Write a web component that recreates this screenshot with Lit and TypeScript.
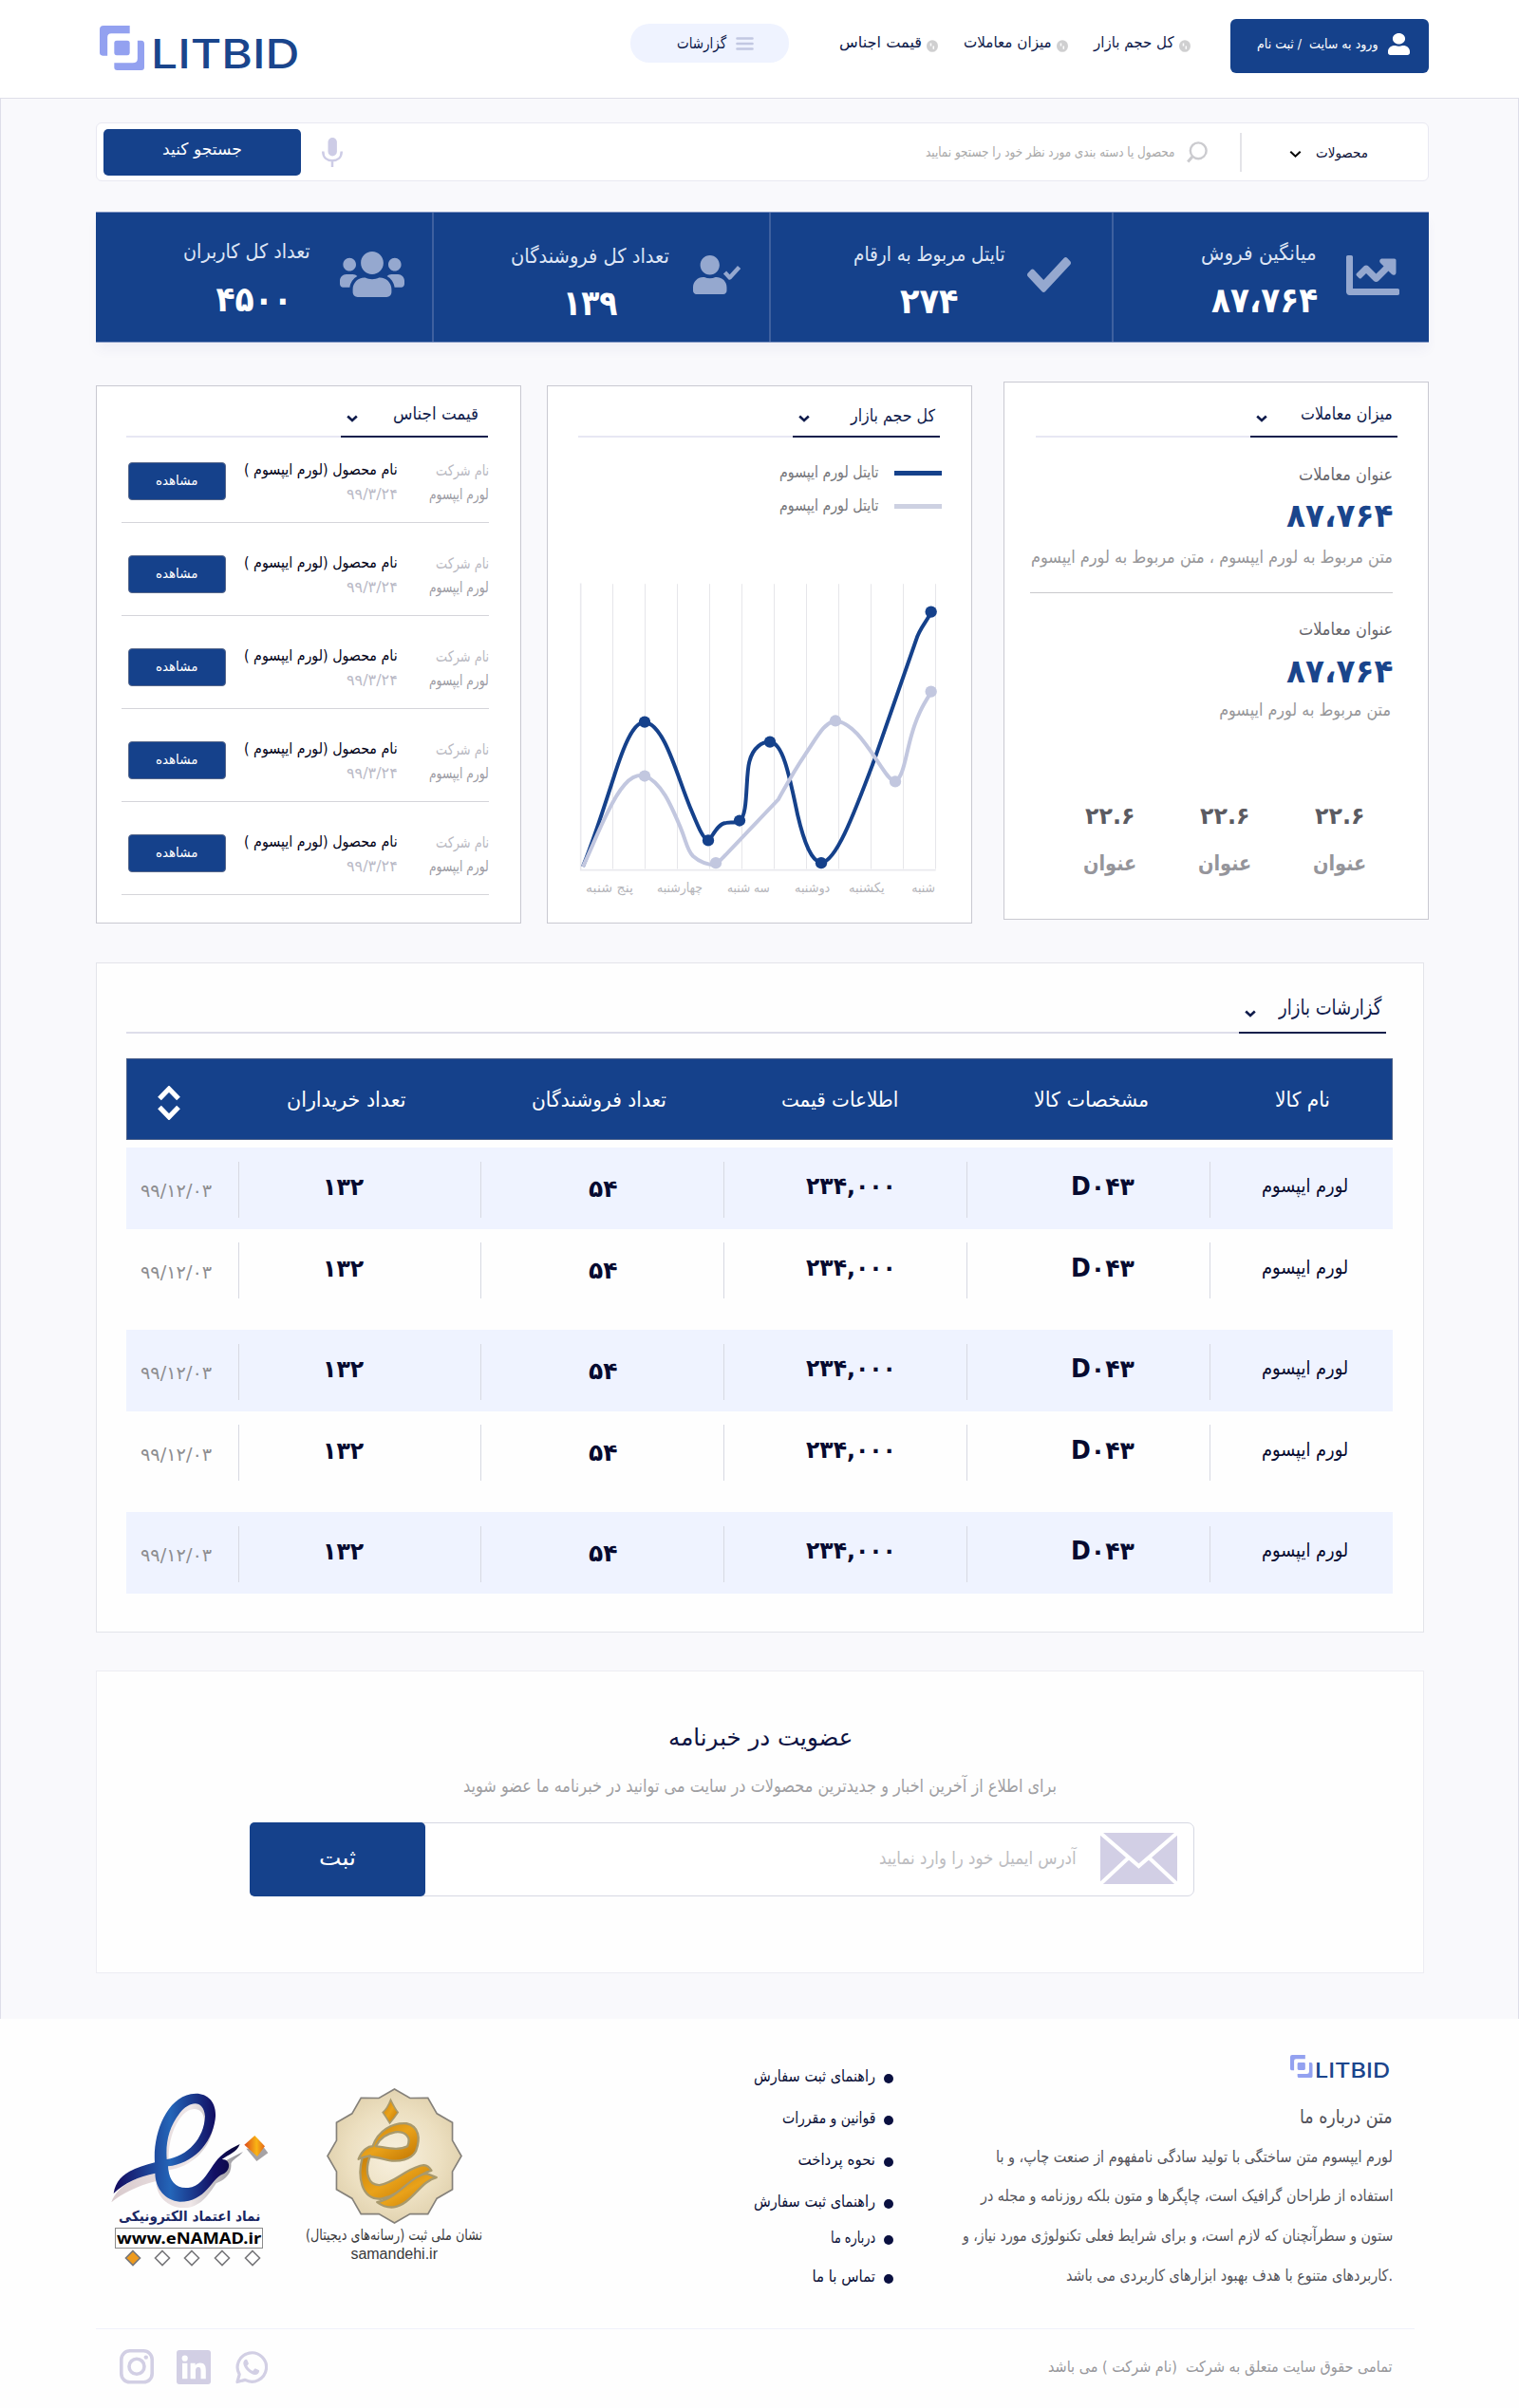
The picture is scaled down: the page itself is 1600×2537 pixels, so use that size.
import { LitElement, html, svg, css } from "lit";
import { customElement, property, state } from "lit/decorators.js";
import { styleMap } from "lit/directives/style-map.js";

/** One line of text condensed or widened to fill a slot of a given width. */
@customElement("fit-text")
class FitText extends LitElement {
  @property({ type: Number }) w = 100;
  @property({ type: Number }) tall = 1.12;
  @state() ratio = 1;
  static styles = css`
    :host { display: block; flex: none; line-height: 1; height: 1em; }
    .slot { height: 1em; direction: rtl; }
    .line { display: inline-block; white-space: pre; transform-origin: 100% 84.6%; line-height: 1; vertical-align: top; }
  `;
  firstUpdated() {
    const line = this.renderRoot.querySelector(".line") as HTMLElement;
    const natural = line.offsetWidth;
    if (natural > 0) this.ratio = this.w / natural;
  }
  render() {
    return html`<div class="slot" style=${styleMap({ width: this.w + "px" })}><span class="line" style=${styleMap({ transform: `scale(${this.ratio}, ${this.tall})` })}><slot></slot></span></div>`;
  }
}

const brand = (w: number, h: number) => html`<svg width=${w} height=${h} viewBox="0 0 46 46" preserveAspectRatio="none" fill="#93a1f0">
  <path d="M4 0H31V8H12Q8 8 8 12V31H3Q0 31 0 28V4Q0 0 4 0Z"/>
  <rect x="15" y="15.5" width="16" height="15" rx="2.5"/>
  <path d="M39 15.5H43Q46 15.5 46 19V43Q46 46 43 46H18Q15 46 15 43V38.5H34Q39 38.5 39 34Z"/></svg>`;

const chevron = (w = 12, h = 8, sw = 2.6) => html`<svg class="chev" width=${w} height=${h} viewBox="0 0 12 8" fill="none" stroke="currentColor" stroke-width=${sw}><path d="M1.2 1.5L6 6L10.8 1.5"/></svg>`;

const userPath = "M224 256c70.7 0 128-57.3 128-128S294.7 0 224 0 96 57.3 96 128s57.3 128 128 128zm89.6 32h-16.7c-22.2 10.2-46.9 16-72.9 16s-50.6-5.8-72.9-16h-16.7C60.2 288 0 348.2 0 422.4V464c0 26.5 21.5 48 48 48h352c26.5 0 48-21.5 48-48v-41.6c0-74.2-60.2-134.4-134.4-134.4z";

const icons = {
  chart: html`<svg width="56" height="42" viewBox="0 64 512 384" preserveAspectRatio="none" fill="#95a8cf"><path d="M496 384H64V80c0-8.84-7.16-16-16-16H16C7.16 64 0 71.16 0 80v336c0 17.67 14.33 32 32 32h464c8.84 0 16-7.16 16-16v-32c0-8.84-7.16-16-16-16zM464 96H345.94c-21.38 0-32.09 25.85-16.97 40.97l32.4 32.4L288 242.75l-73.37-73.37c-12.5-12.5-32.76-12.5-45.25 0l-68.69 68.69c-6.25 6.25-6.25 16.38 0 22.63l22.62 22.62c6.25 6.25 16.38 6.25 22.63 0L192 237.25l73.37 73.37c12.5 12.5 32.76 12.5 45.25 0l96-96 32.4 32.4c15.12 15.12 40.97 4.41 40.97-16.97V112c.01-8.84-7.15-16-15.99-16z"/></svg>`,
  check: html`<svg width="46" height="37" viewBox="0 65 512 382" preserveAspectRatio="none" fill="#95a8cf"><path d="M173.898 439.404l-166.4-166.4c-9.997-9.997-9.997-26.206 0-36.204l36.203-36.204c9.997-9.998 26.207-9.998 36.204 0L192 312.69 432.095 72.596c9.997-9.997 26.207-9.997 36.204 0l36.203 36.204c9.997 9.997 9.997 26.206 0 36.204l-294.4 294.401c-9.998 9.997-26.207 9.997-36.204-.001z"/></svg>`,
  seller: html`<svg width="51" height="41" viewBox="0 0 51 41" fill="#95a8cf"><path transform="scale(.0792 .0801)" d=${userPath}/><path d="M33.5 18L38.6 23.5L48.6 12.5" fill="none" stroke="#95a8cf" stroke-width="4.4" stroke-linejoin="round"/></svg>`,
  users: html`<svg width="68" height="48" viewBox="0 32 640 448" preserveAspectRatio="none" fill="#95a8cf"><path d="M96 224c35.3 0 64-28.7 64-64s-28.7-64-64-64-64 28.7-64 64 28.7 64 64 64zm448 0c35.3 0 64-28.7 64-64s-28.7-64-64-64-64 28.7-64 64 28.7 64 64 64zm32 32h-64c-17.6 0-33.5 7.1-45.1 18.6 40.3 22.1 68.9 62 75.1 109.4h66c17.7 0 32-14.3 32-32v-32c0-35.3-28.7-64-64-64zm-256 0c61.9 0 112-50.1 112-112S381.9 32 320 32 208 82.1 208 144s50.1 112 112 112zm76.8 32h-8.3c-20.8 10-43.9 16-68.5 16s-47.6-6-68.5-16h-8.3C179.6 288 128 339.6 128 403.2V432c0 26.5 21.5 48 48 48h288c26.5 0 48-21.5 48-48v-28.8c0-63.6-51.6-115.2-115.2-115.2zm-223.7-13.4C161.5 263.1 145.6 256 128 256H64c-35.3 0-64 28.7-64 64v32c0 17.7 14.3 32 32 32h65.9c6.3-47.4 34.9-87.3 75.2-109.4z"/></svg>`,
};

const nav = [
  { t: "کل حجم بازار", w: 85 },
  { t: "میزان معاملات", w: 93 },
  { t: "قیمت اجناس", w: 87 },
];

const stats = [
  { cls: "sales", icon: icons.chart, t: "میانگین فروش", tw: 122, n: "۸۷،۷۶۴", nw: 112 },
  { cls: "figures", icon: icons.check, t: "تایتل مربوط به ارقام", tw: 160, n: "۲۷۴", nw: 61 },
  { cls: "sellers", icon: icons.seller, t: "تعداد کل فروشندگان", tw: 167, n: "۱۳۹", nw: 57 },
  { cls: "members", icon: icons.users, t: "تعداد کل کاربران", tw: 134, n: "۴۵۰۰", nw: 81 },
];

const days = [
  { t: "شنبه", w: 25, g: 0 },
  { t: "یکشنبه", w: 38, g: 28 },
  { t: "دوشنبه", w: 37, g: 20 },
  { t: "سه شنبه", w: 45, g: 26 },
  { t: "چهارشنبه", w: 48, g: 26 },
  { t: "پنج شنبه", w: 50, g: 25 },
];

const darkDots = [[357, 964], [558, 1280], [657, 1227], [753, 1017], [915, 1340], [1262, 670]];
const lightDots = [[357, 1108], [582, 1340], [960, 961], [1149, 1123], [1262, 883]];

const links = [
  { t: "راهنمای ثبت سفارش", w: 128 },
  { t: "قوانین و مقررات", w: 98 },
  { t: "نحوه پرداخت", w: 82 },
  { t: "راهنمای ثبت سفارش", w: 128 },
  { t: "درباره ما", w: 47 },
  { t: "تماس با ما", w: 67 },
];

const about = [
  { t: "لورم ایپسوم متن ساختگی با تولید سادگی نامفهوم از صنعت چاپ، و با", w: 418 },
  { t: "استفاده از طراحان گرافیک است، چاپگرها و متون بلکه روزنامه و مجله در", w: 434 },
  { t: "ستون و سطرآنچنان که لازم است، و برای شرایط فعلی تکنولوژی مورد نیاز، و", w: 453 },
  { t: ".کاربردهای متنوع با هدف بهبود ابزارهای کاربردی می باشد", w: 344 },
];

const star = Array.from({ length: 24 }, (_, i) => {
  const r = i % 2 ? 190 : 212;
  const a = (i * Math.PI) / 12;
  return `${(1007 + r * Math.sin(a)).toFixed(1)},${(456 - r * Math.cos(a)).toFixed(1)}`;
}).join(" ");

@customElement("app-root")
class AppRoot extends LitElement {
  static styles = css`
    :host { display: block; width: 1600px; background: #fefefe; font-family: "DejaVu Sans", "Noto Sans", sans-serif; direction: rtl; color: #0b1038; }
    * { box-sizing: border-box; }
    svg { display: block; flex: none; }

    .header { display: flex; align-items: flex-start; height: 104px; padding: 0 95px 0 105px; background: #fff; border-bottom: 1px solid #dedee9; }
    .login { display: flex; width: 209px; height: 57px; margin-top: 20px; padding: 15px 20px 0 0; background: #15418b; color: #fff; border-radius: 6px; font-size: 12.5px; }
    .login fit-text { margin: 6px 11px 0 0; }
    .nav { display: flex; gap: 27px; margin: 38px 42px 0 0; color: #101c4c; font-size: 14.5px; }
    .nav-item { display: flex; gap: 5px; }
    .dot { width: 12px; height: 13px; margin-top: 4px; }
    .reports { display: flex; width: 167px; height: 41px; margin: 25px 53px 0 0; padding: 14px 37px 0 0; background: #eff3ff; border-radius: 20px; font-size: 14.5px; color: #101c4c; }
    .reports fit-text { margin: 0 10px 0 0; }
    .logo { display: flex; direction: ltr; margin: 27px auto 0 0; color: #1a458c; font-family: "Inter", "Roboto", sans-serif; font-weight: 500; }
    .logo.big { font-size: 42.5px; gap: 7px; }
    .logo.big fit-text { margin-top: 9px; }
    .logo.small { font-size: 22px; gap: 3px; margin: 38px 0 0 0; width: 108px; }
    .logo.small fit-text { margin-top: 4.5px; }

    .main { height: 2023px; padding: 25px 94px 0 100px; background: #f9f9fc; border: solid #dedee9; border-width: 0 1px; }
    .search { display: flex; height: 62px; padding-right: 63px; background: #fff; border: 1px solid #e9e9f2; border-radius: 6px; }
    .search .kind { margin-top: 25px; font-size: 13px; }
    .search .chev { margin: 28px 15px 0 0; color: #000; }
    .divider { width: 2px; height: 41px; margin: 10px 50px 0 0; background: #e4e4e8; }
    .search .lens { margin: 19px 34px 0 0; }
    .search .hint { margin: 25px 13px 0 0; color: #a9a9a9; font-size: 12.5px; }
    .search .mic { margin: 15px auto 0 22px; }
    .go { display: flex; justify-content: center; width: 208px; height: 49px; margin: 6px 0 0 7px; padding-top: 15px; background: #15418b; border-radius: 5px; color: #fff; font-size: 15.5px; }

    .stats { display: grid; grid-template-columns: 334px 361px 355px 354px; height: 138px; margin-top: 32px; background: #15418b; border: solid #8498c5; border-width: 1px 0; box-shadow: 0 9px 12px -2px rgba(70, 70, 160, .06); color: #fff; }
    .stat { display: flex; border-left: 2px solid #3e609f; }
    .stat:last-child { border-left: 0; }
    .stat-text { display: flex; flex-direction: column; align-items: center; color: #dde5f5; font-size: 19px; }
    .stat-text .num { color: #fff; font-size: 33px; font-weight: bold; }
    .sales svg { margin: 45px 31px 0 0; }
    .sales .stat-text { margin: 34px 30px 0 0; } .sales .num { margin: 24px 0 0 12px; }
    .figures svg { margin: 47px 43px 0 0; }
    .figures .stat-text { margin: 35px 23px 0 0; } .figures .num { margin: 24px 0 0 0; }
    .sellers svg { margin: 45px 29px 0 0; }
    .sellers .stat-text { margin: 37px 25px 0 0; } .sellers .num { margin: 24px 0 0 0; }
    .members svg { margin: 41px 29px 0 0; }
    .members .stat-text { margin: 32px 31px 0 0; } .members .num { margin: 25px 0 0 15px; }

    .cards { display: grid; grid-template-columns: 448px 448px 448px; column-gap: 30px; height: 570px; margin-top: 41px; align-items: start; }
    .cards > :nth-child(2) { margin-right: 3px; margin-left: -3px; }
    .card { width: 448px; height: 567px; background: #fff; border: 1px solid #c9c9d1; }
    .low { margin-top: 4px; }
    .tabline { display: flex; height: 54px; width: 381px; margin-right: 33px; border-bottom: 2px solid #e7e7f3; }
    .tab { display: flex; justify-content: space-between; width: 155px; margin-bottom: -2px; padding: 0 5px 0 6px; border-bottom: 2px solid #12204c; font-size: 16px; color: #101c4c; }
    .trades .tabline { height: 58px; margin-right: 32px; }
    .trades .tab fit-text { margin-top: 26px; } .trades .chev { margin-top: 34px; }
    .volume .tab fit-text { margin-top: 24px; } .volume .chev { margin-top: 30px; }
    .prices .tab { padding-right: 10px; } .prices .tab fit-text { margin-top: 22px; } .prices .tabline { margin-right: 34px; } .prices .chev { margin-top: 30px; }

    .trade { width: 382px; margin-right: 37px; }
    .trade .name { margin-top: 31px; font-size: 16px; color: #66666c; }
    .trade .sum { margin-top: 20px; font-size: 31px; font-weight: bold; color: #1a458c; }
    .trade .note { margin-top: 20px; font-size: 16px; color: #97979a; }
    .trade.first { height: 163.5px; padding-top: .5px; border-bottom: 1px solid #c9c9cc; }
    .trade.second { height: 194px; padding-top: 0; }
    .trade.second .sum { margin-top: 21px; }
    .trade.second .note { margin: 17px 2px 0 0; }
    .trios { display: flex; gap: 66px; margin-right: 65px; }
    .trio { width: 55px; display: flex; flex-direction: column; align-items: center; gap: 28px; font-weight: bold; font-size: 22px; color: #5b5b62; }
    .trio .cap { font-size: 20px; color: #95959b; }

    .legend { display: flex; align-items: center; height: 35px; margin-right: 31px; gap: 17px; font-size: 15px; color: #77777b; }
    .legend.first { margin-top: 20px; }
    .swatch { width: 50px; height: 5px; background: #15418b; }
    .swatch.pale { background: #cdd1e2; }
    .plot { margin: 62px 34px 0 0; }
    .days { display: flex; margin: 11px 38px 0 0; font-size: 12.5px; color: #b5b5ba; }

    .item { display: flex; width: 387px; height: 98px; margin-right: 33px; border-bottom: 1px solid #d5d5da; font-size: 14.5px; }
    .item.first { height: 90px; } 
    .item .col { display: flex; flex-direction: column; gap: 11px; }
    .item .org { width: 96px; padding-top: 36px; color: #b9b9c2; font-size: 14px; }
    .item .org .strong { color: #9c9ca4; }
    .item .prod { width: 162px; padding-top: 35px; color: #000016; }
    .item .prod .date { color: #b9b9c6; }
    .item.first .org { padding-top: 28px; } .item.first .prod { padding-top: 27px; }
    .view { display: flex; justify-content: center; width: 103px; height: 40px; margin: 34px 19px 0 0; padding-top: 13px; background: #15418b; border: 1px solid #56678b; border-radius: 4px; color: #fff; font-size: 12.5px; }
    .item.first .view { margin-top: 26px; }

    .market { width: 1399px; height: 706px; margin-top: 42px; margin-right: 5px; padding: 0 32px; background: #fefefe; border: 1px solid #e3e4ea; }
    .market .tabline { width: 1327px; height: 74px; margin-right: 7px; border-bottom: 2px solid #dedeea; }
    .market .tab { font-size: 20px; padding-left: 6px; } .market .tab fit-text { margin-top: 37px; } .market .chev { margin-top: 49px; }
    .thead, .row { display: grid; grid-template-columns: 193px 256px 256px 256px 255px 117px; width: 1334px; }
    .thead { height: 86px; margin: 26px 0 8px; background: #15418b; border: 1px solid #4c618a; color: #fff; font-size: 19.5px; padding-top: 34px; }
    .row { height: 86px; color: #060a30; }
    .row:nth-child(odd) { background: #eff3ff; }
    .row:nth-child(even) { margin-bottom: 20px; }
    .cell { height: 59px; margin-top: 15px; border-left: 1px solid #d7d9e2; display: flex; font-size: 22.5px; font-weight: bold; }
    .row:nth-child(even) .cell { margin-top: 14px; }
    .row:nth-child(even) fit-text { margin-top: 1px; }
    .cell:last-child { border-left: 0; }
    .c1 { font-size: 18px; font-weight: normal; padding: 17px 47px 0 0; }
    .c2 { padding: 16px 79px 0 0; }
    .c3 { padding: 15px 74px 0 0; }
    .c4 { padding: 18px 112px 0 0; }
    .c5 { padding: 16px 123px 0 0; }
    .c6 { font-size: 17px; font-weight: normal; color: #8d8d90; padding: 23px 28px 0 0; }
    .h1 { margin-right: 65px; } .h2 { margin-right: 63px; } .h3 { margin-right: 71px; } .h4 { margin-right: 59px; } .h5 { margin-right: 78px; }
    .sort { margin: -6px 60px 0 0; }

    .news { display: flex; flex-direction: column; align-items: center; width: 1399px; height: 319px; margin-top: 40px; margin-right: 5px; padding-top: 60px; background: #fefefe; border: 1px solid #ededf3; color: #0d1242; font-size: 22px; }
    .news .sub { margin-top: 31px; font-size: 17px; color: #a0a0a3; }
    .mail { display: flex; width: 995px; height: 78px; margin: 29px 241px 0 0; align-self: flex-start; border: 1px solid #d6d8e3; border-radius: 7px; padding-right: 17px; background: #fff; }
    .mail svg { margin-top: 10px; }
    .mail .hint { margin: 29px 25px 0 0; font-size: 17px; color: #bdbdc1; }
    .send { display: flex; justify-content: center; width: 185px; height: 78px; margin: -1px auto 0 -1px; padding-top: 28px; border-radius: 5px; background: #15418b; color: #fff; font-size: 21px; }

    .footer { height: 410px; background: #fefefe; }
    .top { display: flex; height: 327px; width: 1389px; margin-right: 110px; padding-right: 23px; border-bottom: 1px solid #f0f1fa; }
    .about { width: 453px; display: flex; flex-direction: column; font-size: 15px; color: #55555c; }
    .about .title { margin: 30px 0 0; font-size: 18px; color: #505058; }
    .about .para { display: flex; flex-direction: column; gap: 26.8px; margin-top: 26px; }
    .links { width: 150px; margin: 54px 73px 0 0; font-size: 15px; color: #0b1038; }
    .link { display: flex; gap: 9px; height: 44px; }
    .link:nth-child(4) { height: 38px; } .link:nth-child(5) { height: 41px; }
    .bullet { width: 10px; height: 10px; border-radius: 50%; background: #0a1040; margin-top: 4px; }
    .samandehi { display: flex; flex-direction: column; align-items: center; width: 186px; margin: 73px 283px 0 0; color: #39393b; font-size: 14px; }
    .samandehi .ltr { margin-top: 5px; font-family: "Liberation Sans", sans-serif; font-size: 16px; }
    .samandehi .fa { margin-top: 5px; }
    .enamad { display: flex; flex-direction: column; width: 170px; margin: 76px 33px 0 0; color: #1b2764; font-weight: bold; font-size: 15px; }
    .enamad > svg:first-child { margin-right: 4px; }
    .enamad .fa { margin: 2px 15px 0 0; }
    .site { width: 156px; height: 22px; margin: 4px 12px 0 0; padding: 2px 1px; border: 1px solid #8b8b8b; color: #000; font-family: "Noto Sans", "Open Sans", sans-serif; font-size: 16px; }
    .rates { margin: 1px 12px 0 0; }
    .bottom { display: flex; padding: 34px 133px 0 126px; color: #97979b; font-size: 14.5px; }
    .bottom fit-text { margin-top: -1px; }
    .social { display: flex; align-items: flex-start; direction: ltr; gap: 24px; margin: -13px auto 0 0; }
  `;

  tabHead(t: string, w: number) {
    return html`<div class="tabline"><div class="tab"><fit-text w=${w}>${t}</fit-text>${chevron()}</div></div>`;
  }

  header() {
    return html`<header class="header">
      <div class="login"><svg width="23" height="23" viewBox="0 0 448 512" preserveAspectRatio="none" fill="#fff"><path d=${userPath}/></svg><fit-text w="128">ورود به سایت  / ثبت نام</fit-text></div>
      <nav class="nav">${nav.map((n) => html`<div class="nav-item"><svg class="dot" viewBox="0 0 12 13"><ellipse cx="6" cy="6.5" rx="6" ry="6.3" fill="#cfcfd0"/><path d="M4.5 3.4V6.4M7.3 6.6V9.8" stroke="#fff" stroke-width="1.5"/></svg><fit-text w=${n.w}>${n.t}</fit-text></div>`)}</nav>
      <div class="reports"><svg width="19" height="14" viewBox="0 0 19 14" stroke="#c2c8e2" stroke-width="2.6" stroke-linecap="round"><path d="M1.5 1.5H17.5M1.5 7H17.5M1.5 12.5H17.5"/></svg><fit-text w="52">گزارشات</fit-text></div>
      <div class="logo big">${brand(47, 47)}<fit-text w="157" tall="1">LITBID</fit-text></div>
    </header>`;
  }

  search() {
    return html`<div class="search">
      <fit-text class="kind" w="55">محصولات</fit-text>${chevron(13, 9, 1.9)}
      <div class="divider"></div>
      <svg class="lens" width="22" height="23" viewBox="0 0 22 23" fill="none" stroke="#cbcbcf" stroke-width="2.4"><circle cx="12.2" cy="9.8" r="8.4"/><path d="M6 16L1.2 21.6" stroke-width="3"/></svg>
      <fit-text class="hint" w="262">محصول یا دسته بندی مورد نظر خود را جستجو نمایید</fit-text>
      <svg class="mic" width="22" height="31" viewBox="0 0 22 31" fill="none" stroke="#cdcce6" stroke-width="2.5"><rect x="6.5" y="0" width="9.4" height="19.5" rx="4.7" fill="#cdcce6" stroke="none"/><path d="M1.3 14.5V15C1.3 21 5.5 24.3 11 24.3S20.7 21 20.7 15V14.5M11 24V31"/></svg>
      <div class="go"><fit-text w="84">جستجو کنید</fit-text></div>
    </div>`;
  }

  trades() {
    return html`<section class="card trades">${this.tabHead("میزان معاملات", 97)}
      <div class="trade first"><fit-text class="name" w="99">عنوان معاملات</fit-text><fit-text class="sum" w="112">۸۷،۷۶۴</fit-text><fit-text class="note" w="381">متن مربوط به لورم ایپسوم ، متن مربوط به لورم ایپسوم</fit-text></div>
      <div class="trade second"><fit-text class="name" w="99">عنوان معاملات</fit-text><fit-text class="sum" w="112">۸۷،۷۶۴</fit-text><fit-text class="note" w="181">متن مربوط به لورم ایپسوم</fit-text></div>
      <div class="trios">${[0, 1, 2].map(() => html`<div class="trio"><fit-text w="53">۲۲.۶</fit-text><fit-text class="cap" w="56">عنوان</fit-text></div>`)}</div>
    </section>`;
  }

  volume() {
    const dot = (c: string) => (p: number[]) => svg`<ellipse cx=${p[0]} cy=${p[1]} rx="18.5" ry="15.5" fill=${c} />`;
    return html`<section class="card low volume">${this.tabHead("کل حجم بازار", 89)}
      <div class="legend first"><span class="swatch"></span><fit-text w="104">تایتل لورم ایپسوم</fit-text></div>
      <div class="legend"><span class="swatch pale"></span><fit-text w="104">تایتل لورم ایپسوم</fit-text></div>
      <svg class="plot" width="380" height="306" viewBox="147 590 1140 775" preserveAspectRatio="none" fill="none">
        <path d="M155 594V1359H1277" stroke="#e9e9ee" stroke-width="5"/>
        ${Array.from({ length: 11 }, (_, i) => svg`<path d=${`M${256.5 + i * 102} 596V1356`} stroke="#e6e6ea" stroke-width="3"/>`)}
        <path vector-effect="non-scaling-stroke" stroke="#15418b" stroke-width="4" d="M162 1350C200 1270 235 1175 260 1110C290 1030 320 965 357 964C420 970 460 1110 500 1190C525 1240 540 1275 558 1280C570 1275 585 1235 615 1233C630 1231 645 1235 657 1227C685 1215 675 1110 688 1070C700 1030 730 1017 753 1017C795 1020 815 1110 840 1210C862 1290 885 1335 915 1340C960 1335 1010 1230 1085 1060L1215 745C1225 715 1245 700 1262 672"/>
        ${darkDots.map(dot("#15418b"))}
        <path vector-effect="non-scaling-stroke" stroke="#c2c7df" stroke-width="4" d="M162 1350C190 1300 210 1255 240 1205C275 1145 310 1100 357 1107C410 1125 440 1185 470 1245C490 1285 490 1305 510 1322C530 1337 560 1345 582 1346L780 1170C800 1140 825 1100 865 1050C905 1000 925 965 960 961C1010 965 1050 1015 1090 1065C1115 1095 1130 1120 1149 1123C1175 1110 1180 1060 1200 1000C1220 940 1240 915 1262 885"/>
        ${lightDots.map(dot("#c2c7df"))}
      </svg>
      <div class="days">${days.map((d) => html`<fit-text w=${d.w} style=${styleMap({ marginRight: d.g + "px" })}>${d.t}</fit-text>`)}</div>
    </section>`;
  }

  prices() {
    return html`<section class="card low prices">${this.tabHead("قیمت اجناس", 90)}
      ${[0, 1, 2, 3, 4].map((i) => html`<div class="item ${i === 0 ? "first" : ""}">
        <div class="col org"><fit-text w="56">نام شرکت</fit-text><fit-text class="strong" w="63">لورم ایپسوم</fit-text></div>
        <div class="col prod"><fit-text w="162">نام محصول (لورم ایپسوم )</fit-text><fit-text class="date" w="54">۹۹/۳/۲۴</fit-text></div>
        <div class="view"><fit-text w="44">مشاهده</fit-text></div>
      </div>`)}
    </section>`;
  }

  market() {
    return html`<section class="market">${this.tabHead("گزارشات بازار", 108)}
      <div class="thead">
        <fit-text class="h1" w="58">نام کالا</fit-text><fit-text class="h2" w="121">مشخصات کالا</fit-text><fit-text class="h3" w="123">اطلاعات قیمت</fit-text><fit-text class="h4" w="142">تعداد فروشندگان</fit-text><fit-text class="h5" w="125">تعداد خریداران</fit-text>
        <svg class="sort" width="24" height="36" viewBox="0 0 24 36" fill="none" stroke="#fff" stroke-width="5.2"><path d="M2 13.5L12 3.2L22 13.5M2 22.5L12 32.8L22 22.5"/></svg>
      </div>
      <div class="rows">${[0, 1, 2, 3, 4].map(() => html`<div class="row">
        <div class="cell c1"><fit-text w="91">لورم ایپسوم</fit-text></div>
        <div class="cell c2"><fit-text w="67" tall="1.15">D۰۴۳</fit-text></div>
        <div class="cell c3"><fit-text w="95">۲۳۴,۰۰۰</fit-text></div>
        <div class="cell c4"><fit-text w="30">۵۴</fit-text></div>
        <div class="cell c5"><fit-text w="43">۱۳۲</fit-text></div>
        <div class="cell c6"><fit-text w="75">۹۹/۱۲/۰۳</fit-text></div>
      </div>`)}</div>
    </section>`;
  }

  newsletter() {
    return html`<section class="news">
      <fit-text w="195">عضویت در خبرنامه</fit-text>
      <fit-text class="sub" w="625">برای اطلاع از آخرین اخبار و جدیدترین محصولات در سایت می توانید در خبرنامه ما عضو شوید</fit-text>
      <div class="mail">
        <svg width="81" height="54" viewBox="0 0 81 54"><rect width="81" height="54" fill="#d2cfe5"/><path d="M0 0L40.5 35L81 0M0 54L30 26M81 54L51 26" fill="none" stroke="#fff" stroke-width="4"/></svg>
        <fit-text class="hint" w="208">آدرس ایمیل خود را وارد نمایید</fit-text>
        <div class="send"><fit-text w="39">ثبت</fit-text></div>
      </div>
    </section>`;
  }

  enamadMark() {
    const e = "M131 570C170 515 225 500 290 478C385 445 432 385 432 320C425 265 375 262 340 300C290 355 272 420 275 490C282 560 315 595 365 580C415 562 425 510 460 478C480 460 500 445 520 426";
    return html`<svg width="170" height="123" viewBox="112 250 510 369">
      <defs><linearGradient id="blue" x1="0" y1="0" x2="1" y2="0"><stop offset="0" stop-color="#130a5e"/><stop offset=".45" stop-color="#2465b8"/><stop offset=".8" stop-color="#120f63"/><stop offset="1" stop-color="#0a0838"/></linearGradient>
      <linearGradient id="silver" x1="0" y1="0" x2="1" y2="0"><stop offset="0" stop-color="#d8c9cc"/><stop offset=".6" stop-color="#efe7e8"/><stop offset="1" stop-color="#8f8f95"/></linearGradient>
      <linearGradient id="fire" x1="0" y1="0" x2="1" y2="0"><stop offset="0" stop-color="#dc4a1c"/><stop offset=".6" stop-color="#f9b514"/><stop offset="1" stop-color="#e3641a"/></linearGradient></defs>
      <path d="M119 602C140 545 200 525 262 500C250 420 285 310 345 285C400 262 450 300 440 370C425 440 370 490 300 500C300 560 330 590 370 582C420 560 435 500 470 475L535 442C520 460 500 468 497 480C500 510 480 530 450 542C425 580 400 620 345 620C290 615 262 580 260 535C200 550 150 575 119 602ZM300 478C370 465 415 400 412 340C408 300 370 298 345 325C310 365 298 420 300 478Z" fill="url(#silver)"/>
      <path d="M126 574C135 510 195 492 256 476C250 390 290 275 370 260C420 250 455 285 447 340C435 420 375 480 298 488C300 530 320 560 362 556C410 550 425 500 455 465C480 440 500 430 525 418C515 445 490 450 468 466C500 465 495 505 470 513C435 525 420 600 335 600C290 595 258 560 257 510C205 520 160 540 126 574ZM294 466C360 455 412 400 415 330C410 275 365 282 335 320C300 365 290 415 294 466Z" fill="url(#blue)"/>
      <path d="M545 432L602 430L614 446L578 472Z" fill="#a6a2a4"/>
      <path d="M572 391L604 425L580 457L539 420Z" fill="url(#fire)"/>
    </svg>`;
  }

  sealMark() {
    const edge = "#a8996c";
    return html`<svg width="143" height="143" viewBox="792 241 430 430">
      <defs><radialGradient id="cream"><stop offset="0" stop-color="#f8f1e0"/><stop offset=".7" stop-color="#ecdfc0"/><stop offset="1" stop-color="#e2d3b0"/></radialGradient>
      <linearGradient id="gold" x1="0" y1="0" x2="1" y2="1"><stop offset="0" stop-color="#c87f08"/><stop offset=".5" stop-color="#e9a21a"/><stop offset="1" stop-color="#c07400"/></linearGradient></defs>
      <polygon points=${star} fill="url(#cream)" stroke="#85817a" stroke-width="5"/>
      <g fill="url(#gold)" stroke=${edge} stroke-width="7" stroke-linejoin="round">
        <path d="M893 466C905 435 925 425 938 425C955 375 1000 350 1045 353C1085 362 1090 400 1075 440C1060 468 1020 475 990 470C955 462 925 450 893 466ZM948 425C985 430 1020 440 1048 425C1062 395 1040 378 1012 380C985 385 960 400 948 425Z"/>
        <path d="M930 455C910 510 925 550 960 548C1010 540 1050 490 1100 485C1112 486 1120 495 1124 502C1070 515 1030 580 965 592C900 595 890 520 905 462Z"/>
        <path d="M952 602C1020 590 1060 515 1110 512L1140 524C1090 535 1060 610 1005 618C985 620 965 612 952 602Z"/>
      </g>
      <path d="M995 278Q1008 305 1018 318Q1005 338 992 352Q980 332 970 318Q985 305 995 278Z" fill="url(#gold)" stroke=${edge} stroke-width="5"/>
    </svg>`;
  }

  footer() {
    return html`<footer class="footer">
      <div class="top">
        <div class="about">
          <div class="logo small">${brand(23.5, 24)}<fit-text w="79" tall="1">LITBID</fit-text></div>
          <fit-text class="title" w="98">متن درباره ما</fit-text>
          <div class="para">${about.map((l) => html`<fit-text w=${l.w}>${l.t}</fit-text>`)}</div>
        </div>
        <div class="links">${links.map((l) => html`<div class="link"><span class="bullet"></span><fit-text w=${l.w}>${l.t}</fit-text></div>`)}</div>
        <div class="samandehi">${this.sealMark()}<fit-text class="fa" w="186">نشان ملی ثبت (رسانه‌های دیجیتال)</fit-text><fit-text class="ltr" w="92" tall="1">samandehi.ir</fit-text></div>
        <div class="enamad">${this.enamadMark()}<fit-text class="fa" w="149" tall="1">نماد اعتماد الکترونیکی</fit-text>
          <div class="site"><fit-text w="152" tall="1">www.eNAMAD.ir</fit-text></div>
          <svg class="rates" width="148" height="18" viewBox="0 0 148 18" fill="none" stroke="#77777a" stroke-width="1.6">
            ${[11, 42, 73, 105, 137].map((x, i) => svg`<path fill=${i === 0 ? "#ee9a1d" : "#fff"} d=${`M${x} 1.5L${x + 7.5} 9L${x} 16.5L${x - 7.5} 9Z`}/>`)}
          </svg>
        </div>
      </div>
      <div class="bottom">
        <fit-text w="363">تمامی حقوق سایت متعلق به شرکت  (نام شرکت ) می باشد</fit-text>
        <div class="social">
          <svg width="36" height="37" viewBox="0 0 36 37" fill="none" stroke="#d2cfe4" stroke-width="3.6"><rect x="1.8" y="1.8" width="32.4" height="33" rx="9"/><circle cx="18" cy="18.3" r="8"/><circle cx="27.8" cy="8.6" r="2.2" fill="#d2cfe4" stroke="none"/></svg>
          <svg width="36" height="37" viewBox="0 0 36 37"><rect y="1" width="36" height="36" rx="3" fill="#d2cfe4"/><g fill="#fefefe"><circle cx="8.7" cy="9.7" r="3.1"/><rect x="6" y="14.8" width="5.4" height="16.4"/><path d="M14.6 14.8H19.7V17C20.7 15.4 22.6 14.4 24.7 14.4C29.6 14.4 30.8 17.6 30.8 22V31.2H25.5V23C25.5 21 25.3 19 22.9 19S20 21 20 23V31.2H14.6Z"/></g></svg>
          <svg width="36" height="37" viewBox="0 0 36 37"><path d="M4 34.5L6.2 26.6A15.2 15.2 0 1 1 12.2 32.4Z" fill="none" stroke="#d2cfe4" stroke-width="3.2" stroke-linejoin="round"/><path fill="#d2cfe4" d="M12 11.2C12.8 10.4 14 10.5 14.4 11.4L15.8 14.7C16 15.2 15.9 15.7 15.5 16.1L14.3 17.5C15.7 20 17.6 21.7 20.2 22.9L21.9 20.9C22.3 20.5 22.7 20.4 23.2 20.6L26.5 22.1C27 22.4 27.2 22.7 27.1 23.3C26.7 25.6 25 27 22.8 27C17.5 26.6 11 20.4 10.3 15.2C10.2 13.7 10.9 12.2 12 11.2Z"/></svg>
        </div>
      </div>
    </footer>`;
  }

  render() {
    return html`${this.header()}
      <main class="main">
        ${this.search()}
        <div class="stats">${stats.map((s) => html`<div class="stat ${s.cls}">${s.icon}<div class="stat-text"><fit-text w=${s.tw}>${s.t}</fit-text><fit-text class="num" w=${s.nw}>${s.n}</fit-text></div></div>`)}</div>
        <div class="cards">${this.trades()}${this.volume()}${this.prices()}</div>
        ${this.market()}${this.newsletter()}
      </main>
      ${this.footer()}`;
  }
}
